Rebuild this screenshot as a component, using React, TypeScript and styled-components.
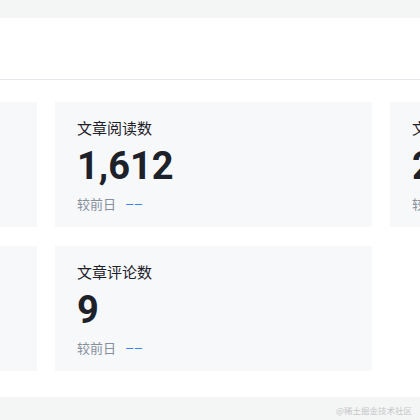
import React from 'react'
import styled, { createGlobalStyle } from 'styled-components'

const GlobalStyle = createGlobalStyle`
  html, body {
    margin: 0;
    padding: 0;
    background: #ffffff;
    font-family: "Noto Sans CJK SC", "Noto Sans", sans-serif;
  }
`

const Page = styled.div`
  width: 420px;
  height: 420px;
  overflow: hidden;
  display: flex;
  flex-direction: column;
`

const TopBand = styled.div`
  height: 18px;
  background: #f4f5f5;
  flex-shrink: 0;
`

const Header = styled.div`
  height: 61px;
  background: #fff;
  border-bottom: 1px solid #e4e6eb;
  flex-shrink: 0;
`

const Content = styled.div`
  padding: 22px 0 26px;
  background: #fff;
  overflow: hidden;
  flex-shrink: 0;
`

// the card grid is scrolled sideways, so its first column sits mostly off screen
const Grid = styled.div`
  display: flex;
  flex-direction: column;
  gap: 19px;
  margin-left: -280px;
`

const Row = styled.div`
  display: flex;
  gap: 18px;
`

const Card = styled.div<{ $empty?: boolean }>`
  width: 317px;
  height: 125px;
  flex-shrink: 0;
  box-sizing: border-box;
  padding: 15px 22px 0;
  background: ${({ $empty }) => ($empty ? 'transparent' : '#f7f8fa')};
`

const Title = styled.div`
  font-size: 15px;
  line-height: 22px;
  color: #1d2129;
`

const Value = styled.div`
  margin-top: 5px;
  font-family: Roboto, "Noto Sans", sans-serif;
  font-size: 38px;
  line-height: 44px;
  font-weight: 700;
  color: #1d2129;
`

const Compare = styled.div`
  margin-top: 6px;
  display: flex;
  align-items: center;
  gap: 10px;
  font-size: 13px;
  line-height: 20px;
  color: #86909c;
`

const Trend = styled.span`
  font-family: "Liberation Sans", Arial, sans-serif;
  color: #1e80ff;
  letter-spacing: 1.5px;
`

const Footer = styled.div`
  flex: 1;
  background: #f4f5f5;
  display: flex;
  justify-content: flex-end;
  align-items: center;
  padding: 2px 8px 0 0;
`

const Watermark = styled.span`
  font-size: 8.5px;
  color: #c4c6c8;
`

type Stat = { title: string; value: string }

// hidden: the column that is scrolled out of view
const rows: (Stat | 'hidden' | null)[][] = [
  ['hidden', { title: '文章阅读数', value: '1,612' }, { title: '文章点赞数', value: '26' }],
  ['hidden', { title: '文章评论数', value: '9' }, null],
]

const StatCard = ({ stat }: { stat: Stat | 'hidden' | null }) => {
  if (stat === null) return <Card $empty />
  if (stat === 'hidden') return <Card />
  return (
    <Card>
      <Title>{stat.title}</Title>
      <Value>{stat.value}</Value>
      <Compare>
        较前日 <Trend>––</Trend>
      </Compare>
    </Card>
  )
}

const App = () => (
  <>
    <GlobalStyle />
    <Page>
      <TopBand />
      <Header />
      <Content>
        <Grid>
          {rows.map((row, i) => (
            <Row key={i}>
              {row.map((stat, j) => (
                <StatCard key={j} stat={stat} />
              ))}
            </Row>
          ))}
        </Grid>
      </Content>
      <Footer>
        <Watermark>@稀土掘金技术社区</Watermark>
      </Footer>
    </Page>
  </>
)

export default App
